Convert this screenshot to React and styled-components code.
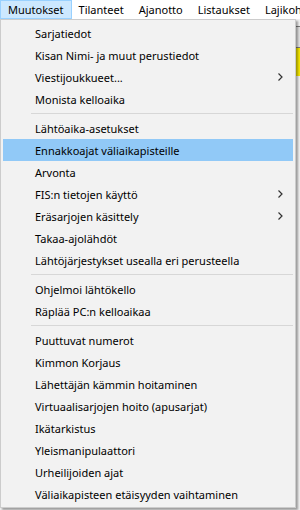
import React from "react";
import styled, { createGlobalStyle } from "styled-components";

const Global = createGlobalStyle`
  html, body { margin: 0; padding: 0; }
  body {
    width: 300px;
    height: 510px;
    overflow: hidden;
    background: #f0f0f0;
    font-family: "Noto Sans", "Segoe UI", sans-serif;
    font-size: 11px;
    color: #000;
  }
`;

const Window = styled.div`
  position: relative;
  width: 300px;
  height: 510px;
  overflow: hidden;
  display: flex;
  flex-direction: column;
`;

const MenuBar = styled.div`
  display: flex;
  height: 19px;
  background: #fff;
  white-space: nowrap;
  flex-shrink: 0;
  overflow: hidden;
`;

const BarItem = styled.div`
  box-sizing: border-box;
  height: 19px;
  padding: 0 7px;
  line-height: 17px;
  font-size: 11px;
  border: 1px solid ${(p) => (p.$open ? "#99d1ff" : "transparent")};
  background: ${(p) => (p.$open ? "#cce8ff" : "transparent")};
  margin-left: ${(p) => (p.$first ? "0" : "-1px")};
`;

const Body = styled.div`
  flex: 1;
  display: flex;
  justify-content: flex-end;
  padding-top: 7px;
`;

const SideControls = styled.div`
  width: 6px;
  display: flex;
  flex-direction: column;
`;

const SideButton = styled.div`
  height: 22px;
  border: 1px solid #7a7a7a;
  border-right: none;
  background: #e1e1e1;
  box-sizing: border-box;
`;

const SideField = styled.div`
  height: 28px;
  background: #f5e800;
`;

const Dropdown = styled.div`
  position: absolute;
  top: 19px;
  left: 0;
  width: 296px;
  box-sizing: border-box;
  padding: 2px;
  background: #f2f2f2;
  border: 1px solid #cccccc;
  box-shadow: 2px 2px 2px rgba(0, 0, 0, 0.35);
  display: flex;
  flex-direction: column;
`;

const Item = styled.div`
  display: flex;
  align-items: center;
  height: 22px;
  padding-left: 32px;
  padding-right: 10px;
  white-space: nowrap;
  font-size: 11px;
  background: ${(p) => (p.$active ? "#91c9f7" : "transparent")};
`;

const Label = styled.span`
  flex: 1;
`;

const Separator = styled.div`
  height: 7px;
  display: flex;
  align-items: center;
  padding-left: 28px;
  &::after {
    content: "";
    flex: 1;
    height: 1px;
    background: #d7d7d7;
  }
`;

const Chevron = () => (
  <svg width="5" height="8" viewBox="0 0 5 8">
    <polyline points="0.5,0.5 4,4 0.5,7.5" fill="none" stroke="#333" strokeWidth="1.2" />
  </svg>
);

const groups = [
  [
    { t: "Sarjatiedot" },
    { t: "Kisan Nimi- ja muut perustiedot" },
    { t: "Viestijoukkueet...", sub: true },
    { t: "Monista kelloaika" },
  ],
  [
    { t: "Lähtöaika-asetukset" },
    { t: "Ennakkoajat väliaikapisteille", active: true },
    { t: "Arvonta" },
    { t: "FIS:n tietojen käyttö", sub: true },
    { t: "Eräsarjojen käsittely", sub: true },
    { t: "Takaa-ajolähdöt" },
    { t: "Lähtöjärjestykset usealla eri perusteella" },
  ],
  [{ t: "Ohjelmoi lähtökello" }, { t: "Räplää PC:n kelloaikaa" }],
  [
    { t: "Puuttuvat numerot" },
    { t: "Kimmon Korjaus" },
    { t: "Lähettäjän kämmin hoitaminen" },
    { t: "Virtuaalisarjojen hoito (apusarjat)" },
    { t: "Ikätarkistus" },
    { t: "Yleismanipulaattori" },
    { t: "Urheilijoiden ajat" },
    { t: "Väliaikapisteen etäisyyden vaihtaminen" },
  ],
];

export default function App() {
  return (
    <>
      <Global />
      <Window>
        <MenuBar>
          <BarItem $open $first>Muutokset</BarItem>
          <BarItem>Tilanteet</BarItem>
          <BarItem>Ajanotto</BarItem>
          <BarItem>Listaukset</BarItem>
          <BarItem>Lajikohtaiset</BarItem>
        </MenuBar>
        <Body>
          <SideControls>
            <SideButton />
            <SideField />
          </SideControls>
        </Body>
        <Dropdown>
          {groups.map((g, gi) => (
            <React.Fragment key={gi}>
              {gi > 0 && <Separator />}
              {g.map((it) => (
                <Item key={it.t} $active={it.active}>
                  <Label>{it.t}</Label>
                  {it.sub && <Chevron />}
                </Item>
              ))}
            </React.Fragment>
          ))}
        </Dropdown>
      </Window>
    </>
  );
}
